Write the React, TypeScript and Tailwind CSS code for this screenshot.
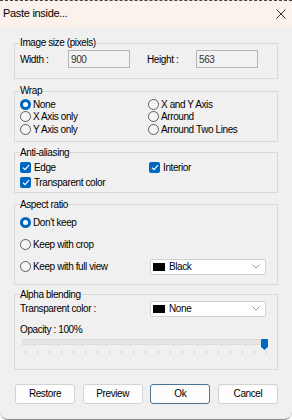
import React from "react";

const font = { fontFamily: '"Liberation Sans", Arial, sans-serif' };

function Radio({ checked }: { checked?: boolean }) {
  return checked ? (
    <span className="flex h-[11px] w-[11px] shrink-0 items-center justify-center rounded-full bg-[#0067c0]">
      <span className="h-[5px] w-[5px] rounded-full bg-white" />
    </span>
  ) : (
    <span className="h-[11px] w-[11px] shrink-0 rounded-full border border-[#5c5c5c] bg-[#f6f6f6]" />
  );
}

function Check() {
  return (
    <span className="flex h-[11px] w-[11px] shrink-0 items-center justify-center rounded-[2px] bg-[#0067c0]">
      <svg width="8" height="7" viewBox="0 0 8 7">
        <path d="M1 3.6 L3 5.6 L7 1.2" stroke="white" strokeWidth="1.2" fill="none" />
      </svg>
    </span>
  );
}

function Dropdown({ label }: { label: string }) {
  return (
    <div className="flex h-[16px] w-[116px] items-center rounded-[2px] border border-[#d2d2d2] bg-white pl-[2px] pr-[5px]">
      <span className="h-[8px] w-[12px] bg-black" />
      <span className="ml-[4px] flex-1">{label}</span>
      <svg width="8" height="5" viewBox="0 0 8 5">
        <path d="M0.5 0.5 L4 4 L7.5 0.5" stroke="#9a9a9a" strokeWidth="1" fill="none" />
      </svg>
    </div>
  );
}

function Group({ title, children, className = "" }: { title: string; children: React.ReactNode; className?: string }) {
  return (
    <fieldset className={`border border-[#d9d9d9] px-[5px] ${className}`}>
      <legend className="leading-[12px]">{title}</legend>
      {children}
    </fieldset>
  );
}

function Btn({ label, primary }: { label: string; primary?: boolean }) {
  return (
    <div
      className={`flex h-[20px] w-[60px] items-center justify-center rounded-[3px] bg-[#fdfdfd] ${
        primary ? "border border-[#47769a]" : "border border-[#d3d3d3]"
      }`}
    >
      {label}
    </div>
  );
}

export default function App() {
  const ticks = Array.from({ length: 21 });
  return (
    <div
      style={font}
      className="flex h-[420px] w-[292px] flex-col overflow-hidden rounded-b-[8px] border-b border-[#8a8a8a] bg-[#f0f0f0] text-[10px] tracking-[-0.4px] text-black"
    >
      <div className="flex h-[26px] shrink-0 items-center justify-between border-t border-dashed border-[#444] bg-[#fcf2ec] pl-[3px] pr-[6px]">
        <span className="text-[11px] tracking-[-0.3px]">Paste inside...</span>
        <svg width="10" height="10" viewBox="0 0 10 10">
          <path d="M0.5 0.5 L9.5 9.5 M9.5 0.5 L0.5 9.5" stroke="#333" strokeWidth="1" />
        </svg>
      </div>

      <div className="flex flex-col px-[14px]">
        <Group title="Image size (pixels)" className="mt-[11px] pb-[10px]">
          <div className="mt-[1px] flex h-[18px] items-center">
            <span className="w-[48px]">Width :</span>
            <div className="flex h-[18px] w-[62px] items-center border border-[#b4b4b4] bg-[#f2f2f2] pl-[2px] text-[#333]">900</div>
            <span className="ml-[17px] w-[49px]">Height :</span>
            <div className="flex h-[18px] w-[62px] items-center border border-[#b4b4b4] bg-[#f2f2f2] pl-[2px] text-[#333]">563</div>
          </div>
        </Group>

        <Group title="Wrap" className="mt-[6px] pb-[5px]">
          <div className="mt-[1px] grid grid-cols-[128px_1fr] grid-rows-[repeat(3,12.5px)]">
            <div className="flex items-center gap-[2px]"><Radio checked /><span>None</span></div>
            <div className="flex items-center gap-[2px]"><Radio /><span>X and Y Axis</span></div>
            <div className="flex items-center gap-[2px]"><Radio /><span>X Axis only</span></div>
            <div className="flex items-center gap-[2px]"><Radio /><span>Arround</span></div>
            <div className="flex items-center gap-[2px]"><Radio /><span>Y Axis only</span></div>
            <div className="flex items-center gap-[2px]"><Radio /><span>Arround Two Lines</span></div>
          </div>
        </Group>

        <Group title="Anti-aliasing" className="mt-[5px] pb-[2px]">
          <div className="mt-[1px] grid grid-cols-[129px_1fr] grid-rows-[repeat(2,15px)]">
            <div className="flex items-center gap-[3px]"><Check /><span>Edge</span></div>
            <div className="flex items-center gap-[3px]"><Check /><span>Interior</span></div>
            <div className="flex items-center gap-[3px]"><Check /><span>Transparent color</span></div>
          </div>
        </Group>

        <Group title="Aspect ratio" className="mt-[6px] pb-[6px]">
          <div className="mt-[1px] flex flex-col">
            <div className="flex h-[22px] items-center gap-[2px]"><Radio checked /><span>Don't keep</span></div>
            <div className="flex h-[22px] items-center gap-[2px]"><Radio /><span>Keep with crop</span></div>
            <div className="flex h-[22px] items-center">
              <div className="flex w-[130px] items-center gap-[2px]"><Radio /><span>Keep with full view</span></div>
              <Dropdown label="Black" />
            </div>
          </div>
        </Group>

        <Group title="Alpha blending" className="mt-[4px] pb-[16px]">
          <div className="flex h-[16px] items-center">
            <span className="w-[130px]">Transparent color :</span>
            <Dropdown label="None" />
          </div>
          <div className="mt-[7px] h-[12px] leading-[12px]">Opacity : 100%</div>
          <div className="relative ml-[2px] mr-[4px] mt-[3px] h-[6px] border border-[#dcdcdc] bg-[#e6e6e6]">
            <svg className="absolute right-[-1px] top-[-1px]" width="7" height="11" viewBox="0 0 7 11">
              <path d="M0 1 Q0 0 1 0 L6 0 Q7 0 7 1 L7 8 L3.5 11 L0 8 Z" fill="#0067c0" />
            </svg>
          </div>
          <div className="ml-[5px] mr-[5px] mt-[6px] flex h-[2px] justify-between">
            {ticks.map((_, i) => (
              <span key={i} className="h-[2px] w-[1px] bg-[#c4c4c4]" />
            ))}
          </div>
        </Group>

        <div className="mt-[14px] flex justify-between pl-[1px]">
          <Btn label="Restore" />
          <Btn label="Preview" />
          <Btn label="Ok" primary />
          <Btn label="Cancel" />
        </div>
      </div>
    </div>
  );
}
